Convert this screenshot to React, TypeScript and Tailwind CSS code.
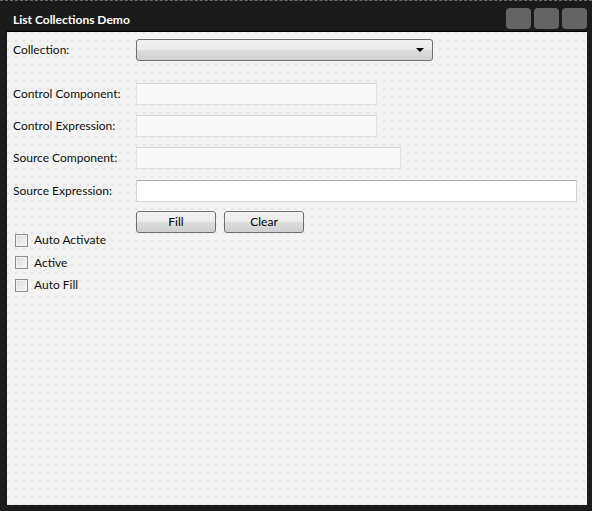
import React, { useState } from 'react'

const font = { fontFamily: '"Lato", "Noto Sans", sans-serif' }

function TextBox({ width, white }: { width: string; white?: boolean }) {
  return (
    <input
      type="text"
      className={`h-[22px] ${width} border px-1 outline-none ${
        white
          ? 'bg-white border-[#d4d5da] border-t-[#abadb3]'
          : 'bg-[#fafafa]/80 border-[#e2e2e2] border-t-[#d6d6da]'
      }`}
    />
  )
}

function Row({ label, children }: { label: string; children: React.ReactNode }) {
  return (
    <div className="flex items-center">
      <label className="w-[123px] text-[12px] text-[#111]">{label}</label>
      {children}
    </div>
  )
}

function Check({ label }: { label: string }) {
  const [on, setOn] = useState(false)
  return (
    <label className="flex items-center gap-[6px] text-[12px] text-[#111] h-[22.5px]">
      <span
        onClick={() => setOn(!on)}
        className="w-[13px] h-[13px] ml-[2px] border border-[#8f8f8f] bg-gradient-to-br from-[#dcdcdc] to-[#f7f7f7] shadow-[inset_0_0_0_1px_#f4f4f4] flex items-center justify-center text-[10px]"
      >
        {on ? '✓' : ''}
      </span>
      {label}
    </label>
  )
}

function GlassButton({ label }: { label: string }) {
  return (
    <button
      type="button"
      className="w-[80px] h-[22px] rounded-[3px] border border-[#707070] bg-[linear-gradient(#f2f2f2_0%,#ebebeb_50%,#dddddd_50%,#cfcfcf_100%)] text-[12px] text-black"
    >
      {label}
    </button>
  )
}

export default function App() {
  return (
    <div className="w-[592px] h-[511px] bg-[#1b1b1b] flex flex-col border-t border-dashed border-[#6a6a6a]" style={font}>
      <div className="h-[30px] flex items-start justify-between">
        <span className="pl-[13px] pt-[13px] text-[12px] font-bold text-white leading-none">
          List Collections Demo
        </span>
        <div className="flex gap-[3px] pt-[7px] pr-[5px]">
          <div className="w-[25px] h-[21px] rounded-[4px] bg-[#646464]" />
          <div className="w-[25px] h-[21px] rounded-[4px] bg-[#646464]" />
          <div className="w-[25px] h-[21px] rounded-[4px] bg-[#646464]" />
        </div>
      </div>

      <div className="ml-[7px] mr-[5px] h-[474px] border-t border-black bg-[#f3f3f3] bg-[radial-gradient(circle_at_1px_1px,#dadada_0.6px,transparent_0.9px)] bg-[size:8px_8px] pl-[6px] pt-[7px] flex flex-col">
        <Row label="Collection:">
          <div className="relative w-[297px] h-[22px] rounded-[3px] border border-[#707070] bg-[linear-gradient(#f2f2f2_0%,#ebebeb_50%,#dddddd_50%,#cfcfcf_100%)]">
            <span className="absolute right-[8px] top-[8px] w-0 h-0 border-l-[4px] border-r-[4px] border-t-[4px] border-l-transparent border-r-transparent border-t-black" />
          </div>
        </Row>

        <div className="mt-[22px] flex flex-col gap-[10px]">
          <Row label="Control Component:">
            <TextBox width="w-[241px]" />
          </Row>
          <Row label="Control Expression:">
            <TextBox width="w-[241px]" />
          </Row>
          <Row label="Source Component:">
            <TextBox width="w-[265px]" />
          </Row>
          <div className="mt-[1px]">
            <Row label="Source Expression:">
              <TextBox width="w-[441px]" white />
            </Row>
          </div>
        </div>

        <div className="mt-[9px] ml-[123px] flex gap-[8px]">
          <GlassButton label="Fill" />
          <GlassButton label="Clear" />
        </div>

        <div className="-mt-[4px] flex flex-col">
          <Check label="Auto Activate" />
          <Check label="Active" />
          <Check label="Auto Fill" />
        </div>
      </div>
    </div>
  )
}
